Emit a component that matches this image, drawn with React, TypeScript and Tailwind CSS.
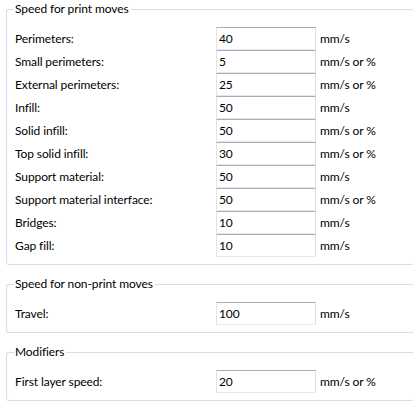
import React from "react";

type Row = { label: string; value: string; unit: string };

const printRows: Row[] = [
  { label: "Perimeters:", value: "40", unit: "mm/s" },
  { label: "Small perimeters:", value: "5", unit: "mm/s or %" },
  { label: "External perimeters:", value: "25", unit: "mm/s or %" },
  { label: "Infill:", value: "50", unit: "mm/s" },
  { label: "Solid infill:", value: "50", unit: "mm/s or %" },
  { label: "Top solid infill:", value: "30", unit: "mm/s or %" },
  { label: "Support material:", value: "50", unit: "mm/s" },
  { label: "Support material interface:", value: "50", unit: "mm/s or %" },
  { label: "Bridges:", value: "10", unit: "mm/s" },
  { label: "Gap fill:", value: "10", unit: "mm/s" },
];

function Field({ row }: { row: Row }) {
  return (
    <div className="flex items-center h-[23px] pl-[1px]">
      <div className="w-[201px] shrink-0">{row.label}</div>
      <div className="w-[100px] h-[23px] shrink-0 border border-t-[#abadb3] border-l-[#e2e3ea] border-r-[#dbdfe6] border-b-[#e3e9ef] bg-white pl-[2px] flex items-center">
        {row.value}
      </div>
      <div className="ml-[4px]">{row.unit}</div>
    </div>
  );
}

function Group({
  title,
  rows,
  className,
}: {
  title: string;
  rows: Row[];
  className?: string;
}) {
  return (
    <fieldset
      className={
        "ml-[6px] w-[408px] border border-[#d5dfe5] border-r-transparent rounded-[3px] pl-[7px] pr-0 pt-[10px] pb-[7px] " +
        (className ?? "")
      }
    >
      <legend className="px-[1px] pr-[2px] leading-[16px]">{title}</legend>
      <div className="flex flex-col">
        {rows.map((r) => (
          <Field key={r.label} row={r} />
        ))}
      </div>
    </fieldset>
  );
}

export default function App() {
  return (
    <div
      className="w-[415px] h-[405px] overflow-hidden bg-white text-[12px] tracking-[-0.1px] text-black pt-[1px]"
      style={{ fontFamily: 'Lato, "Noto Sans", sans-serif' }}
    >
      <Group title="Speed for print moves" rows={printRows} />
      <Group
        title="Speed for non-print moves"
        rows={[{ label: "Travel:", value: "100", unit: "mm/s" }]}
        className="mt-[11px]"
      />
      <Group
        title="Modifiers"
        rows={[{ label: "First layer speed:", value: "20", unit: "mm/s or %" }]}
        className="mt-[11px]"
      />
    </div>
  );
}
